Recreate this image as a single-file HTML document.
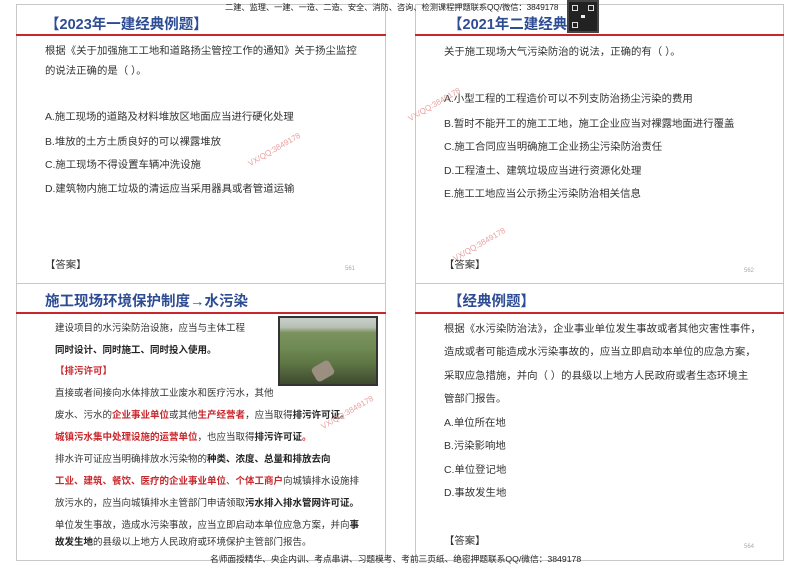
<!DOCTYPE html>
<html><head><meta charset="utf-8"><style>
*{margin:0;padding:0;box-sizing:border-box}
body{width:800px;height:566px;background:#fff;position:relative;overflow:hidden;font-family:"Liberation Sans","Noto Sans CJK SC",sans-serif;color:#333}
.s{position:absolute;border:1px solid #c8c8c8;background:#fff}
.t{position:absolute;font-size:14.5px;font-weight:bold;color:#2d4c94;white-space:nowrap;line-height:18px}
.ln{position:absolute;height:2px;background:#c8282d}
.x{position:absolute;font-size:10.4px;white-space:nowrap;line-height:14px;color:#333}
.w .x{font-size:9.5px}
.b{font-weight:bold;color:#222}
.r{font-weight:bold;color:#c8282d}
.pn{position:absolute;font-size:6px;color:#aaa}
.wm{position:absolute;font-size:8px;color:#e8a0a0;transform:rotate(-30deg);white-space:nowrap}
.hd{position:absolute;font-size:8.2px;color:#222;white-space:nowrap;line-height:10px}
</style></head><body>
<div class="s" style="left:16px;top:4px;width:370px;height:280px"></div>
<div class="s" style="left:415px;top:4px;width:369px;height:280px"></div>
<div class="s" style="left:16px;top:283px;width:370px;height:278px"></div>
<div class="s" style="left:415px;top:283px;width:369px;height:278px"></div>

<div class="ln" style="left:16px;top:34px;width:370px"></div>
<div class="ln" style="left:415px;top:34px;width:369px"></div>
<div class="ln" style="left:16px;top:312px;width:370px"></div>
<div class="ln" style="left:415px;top:312px;width:369px"></div>

<div class="hd" style="left:225px;top:3px">二建、监理、一建、一造、二造、安全、消防、咨询、检测课程押题联系QQ/微信：3849178</div>
<div style="position:absolute;left:567px;top:0;width:32px;height:33px;background:#222;border:2px solid #444"><div style="position:absolute;left:3px;top:3px;width:6px;height:6px;border:1px solid #ddd"></div><div style="position:absolute;right:3px;top:3px;width:6px;height:6px;border:1px solid #ddd"></div><div style="position:absolute;left:3px;bottom:3px;width:6px;height:6px;border:1px solid #ddd"></div><div style="position:absolute;left:12px;top:13px;width:4px;height:3px;background:#eee"></div></div>

<!-- slide 1 -->
<div class="t" style="left:45px;top:16px">【2023年一建经典例题】</div>
<div class="x" style="left:45px;top:45px">根据《关于加强施工工地和道路扬尘管控工作的通知》关于扬尘监控</div>
<div class="x" style="left:45px;top:65px">的说法正确的是（ ）。</div>
<div class="x" style="left:45px;top:111px">A.施工现场的道路及材料堆放区地面应当进行硬化处理</div>
<div class="x" style="left:45px;top:136px">B.堆放的土方土质良好的可以裸露堆放</div>
<div class="x" style="left:45px;top:159px">C.施工现场不得设置车辆冲洗设施</div>
<div class="x" style="left:45px;top:183px">D.建筑物内施工垃圾的清运应当采用器具或者管道运输</div>
<div class="x" style="left:45px;top:259px">【答案】</div>
<div class="pn" style="left:345px;top:266px">561</div>
<div class="wm" style="left:245px;top:145px">VX/QQ:3849178</div>

<!-- slide 2 -->
<div class="t" style="left:448px;top:16px">【2021年二建经典</div>
<div class="x" style="left:444px;top:46px">关于施工现场大气污染防治的说法，正确的有（ ）。</div>
<div class="x" style="left:444px;top:93px">A.小型工程的工程造价可以不列支防治扬尘污染的费用</div>
<div class="x" style="left:444px;top:118px">B.暂时不能开工的施工工地，施工企业应当对裸露地面进行覆盖</div>
<div class="x" style="left:444px;top:141px">C.施工合同应当明确施工企业扬尘污染防治责任</div>
<div class="x" style="left:444px;top:165px">D.工程渣土、建筑垃圾应当进行资源化处理</div>
<div class="x" style="left:444px;top:188px">E.施工工地应当公示扬尘污染防治相关信息</div>
<div class="x" style="left:444px;top:259px">【答案】</div>
<div class="pn" style="left:744px;top:268px">562</div>
<div class="wm" style="left:405px;top:100px">VX/QQ:3849178</div>
<div class="wm" style="left:450px;top:240px">VX/QQ:3849178</div>

<!-- slide 3 -->
<div class="w">
<div class="t" style="left:45px;top:293px">施工现场环境保护制度→水污染</div>
<div style="position:absolute;left:278px;top:316px;width:100px;height:70px;border:2px solid #333;background:linear-gradient(180deg,#c9cfc9 0%,#b8c0b4 14%,#7c9260 22%,#6f8a52 45%,#5d7444 70%,#3e4a30 100%)"><div style="position:absolute;left:33px;top:45px;width:20px;height:16px;background:#9a8f80;transform:rotate(-30deg);border-radius:4px"></div></div>
<div class="x" style="left:55px;top:322px">建设项目的水污染防治设施，应当与主体工程</div>
<div class="x b" style="left:55px;top:344px">同时设计、同时施工、同时投入使用。</div>
<div class="x r" style="left:55px;top:365px">【排污许可】</div>
<div class="x" style="left:55px;top:387px">直接或者间接向水体排放工业废水和医疗污水，其他</div>
<div class="x" style="left:55px;top:409px">废水、污水的<span class="r">企业事业单位</span>或其他<span class="r">生产经营者</span>，应当取得<span class="b">排污许可证。</span></div>
<div class="x" style="left:55px;top:431px"><span class="r">城镇污水集中处理设施的运营单位</span>，也应当取得<span class="b">排污许可证</span><span class="r">。</span></div>
<div class="x" style="left:55px;top:453px">排水许可证应当明确排放水污染物的<span class="b">种类、浓度、总量和排放去向</span></div>
<div class="x" style="left:55px;top:475px"><span class="r">工业、建筑、餐饮、医疗的企业事业单位</span>、<span class="r">个体工商户</span>向城镇排水设施排</div>
<div class="x" style="left:55px;top:497px">放污水的，应当向城镇排水主管部门申请领取<span class="b">污水排入排水管网许可证。</span></div>
<div class="x" style="left:55px;top:519px">单位发生事故，造成水污染事故，应当立即启动本单位应急方案，并向<span class="b">事</span></div>
<div class="x" style="left:55px;top:536px"><span class="b">故发生地</span>的县级以上地方人民政府或环境保护主管部门报告。</div>
</div>
<div class="wm" style="left:318px;top:408px">VX/QQ:3849178</div>

<!-- slide 4 -->
<div class="t" style="left:448px;top:293px">【经典例题】</div>
<div class="x" style="left:444px;top:323px">根据《水污染防治法》，企业事业单位发生事故或者其他灾害性事件，</div>
<div class="x" style="left:444px;top:346px">造成或者可能造成水污染事故的，应当立即启动本单位的应急方案，</div>
<div class="x" style="left:444px;top:370px">采取应急措施，并向（ ）的县级以上地方人民政府或者生态环境主</div>
<div class="x" style="left:444px;top:393px">管部门报告。</div>
<div class="x" style="left:444px;top:417px">A.单位所在地</div>
<div class="x" style="left:444px;top:440px">B.污染影响地</div>
<div class="x" style="left:444px;top:464px">C.单位登记地</div>
<div class="x" style="left:444px;top:487px">D.事故发生地</div>
<div class="x" style="left:444px;top:535px">【答案】</div>
<div class="pn" style="left:744px;top:544px">564</div>

<div class="hd" style="left:210px;top:554px;font-size:8.7px">名师面授精华、央企内训、考点串讲、习题模考、考前三页纸、绝密押题联系QQ/微信：3849178</div>
</body></html>
